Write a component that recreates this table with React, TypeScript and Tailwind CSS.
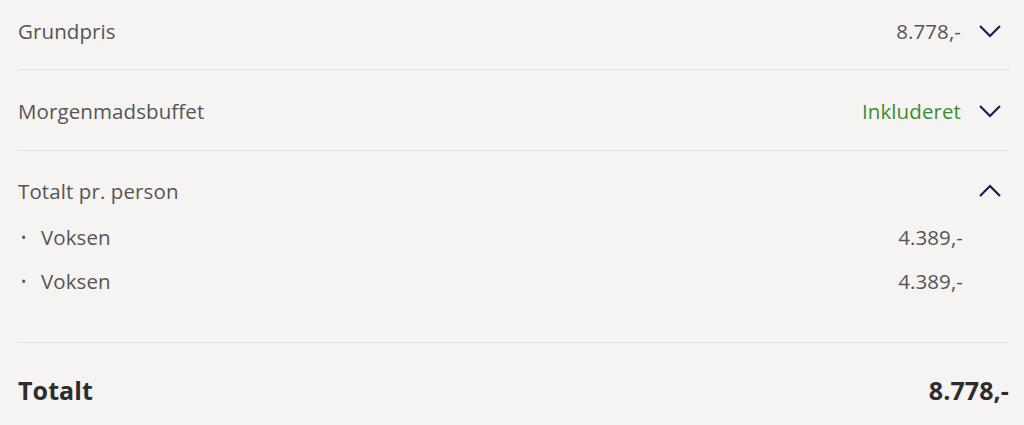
function Chevron({ up }: { up?: boolean }) {
  return (
    <svg width="24" height="14" viewBox="0 0 24 14" className="text-[#1c195a]">
      <path
        d={up ? 'M2 12 L12 2 L22 12' : 'M2 2 L12 12 L22 2'}
        fill="none"
        stroke="currentColor"
        strokeWidth="2.2"
      />
    </svg>
  );
}

function Row({ label, value, green, up }: { label: string; value?: string; green?: boolean; up?: boolean }) {
  return (
    <div className="flex items-center justify-between h-[62px]">
      <span>{label}</span>
      <div className="flex items-center gap-[17px] pr-[7px]">
        {value && <span className={green ? 'text-[#3d8b2f]' : ''}>{value}</span>}
        <Chevron up={up} />
      </div>
    </div>
  );
}

export default function App() {
  return (
    <div className="min-h-[425px] w-[1024px] bg-[#f5f4f2] pl-[18px] pr-[15px] text-[20.5px] tracking-[0.1px] text-[#555555] font-['Open_Sans',sans-serif]">
      <div className="border-b border-[#e4e2de] pb-[7px]">
        <Row label="Grundpris" value="8.778,-" />
      </div>
      <div className="border-b border-[#e4e2de] pt-[10px] pb-[8px]">
        <Row label="Morgenmadsbuffet" value="Inkluderet" green />
      </div>
      <div className="border-b border-[#e4e2de] pt-[18px] pb-[39px]">
        <div className="flex items-center justify-between h-[44px]">
          <span>Totalt pr. person</span>
          <div className="pr-[7px]">
            <Chevron up />
          </div>
        </div>
        <div className="mt-[2px]">
          {['4.389,-', '4.389,-'].map((v, i) => (
            <div key={i} className="flex items-center justify-between h-[44px] pr-[46px]">
              <span className="flex items-center">
                <span className="w-[23px] pl-[3px] text-[14px]">•</span>
                Voksen
              </span>
              <span>{v}</span>
            </div>
          ))}
        </div>
      </div>
      <div className="flex items-center justify-between h-[96px] text-[25px] font-bold text-[#2d2d2d]">
        <span>Totalt</span>
        <span>8.778,-</span>
      </div>
    </div>
  );
}
